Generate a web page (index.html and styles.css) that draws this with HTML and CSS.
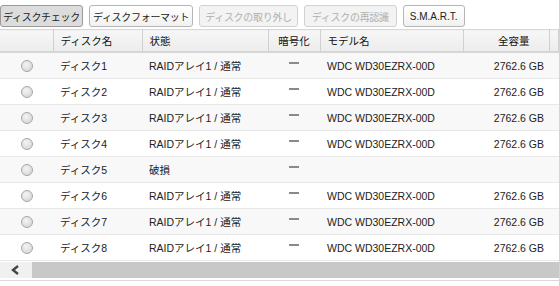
FILE: index.html
```html
<!DOCTYPE html>
<html lang="ja">
<head>
  <meta charset="UTF-8">
  <title>ディスク</title>
  <link rel="stylesheet" href="styles.css">
</head>
<body>
  <div class="toolbar">
    <button class="btn pressed">ディスクチェック</button>
    <button class="btn fmt">ディスクフォーマット</button>
    <button class="btn" disabled>ディスクの取り外し</button>
    <button class="btn rescan" disabled>ディスクの再認識</button>
    <button class="btn smart">S.M.A.R.T.</button>
  </div>
  <table class="grid">
    <colgroup>
      <col style="width:53px"><col style="width:89px"><col style="width:126px"><col style="width:52px"><col style="width:143px"><col style="width:86px"><col>
    </colgroup>
    <thead>
      <tr><th></th><th>ディスク名</th><th>状態</th><th class="c">暗号化</th><th>モデル名</th><th class="r">全容量</th><th></th></tr>
    </thead>
    <tbody id="rows"></tbody>
  </table>
  <div class="hscroll">
    <div class="arrow"><svg width="12" height="12" viewBox="0 0 12 12"><path d="M8 2 L3 6 L8 10" fill="none" stroke="#444" stroke-width="2.4"/></svg></div>
    <div class="track"></div>
  </div>
  <div class="bottom"></div>

<script>
const disks = [
  ['ディスク1', 'RAIDアレイ1 / 通常', 'WDC WD30EZRX-00D', '2762.6 GB'],
  ['ディスク2', 'RAIDアレイ1 / 通常', 'WDC WD30EZRX-00D', '2762.6 GB'],
  ['ディスク3', 'RAIDアレイ1 / 通常', 'WDC WD30EZRX-00D', '2762.6 GB'],
  ['ディスク4', 'RAIDアレイ1 / 通常', 'WDC WD30EZRX-00D', '2762.6 GB'],
  ['ディスク5', '破損', '', ''],
  ['ディスク6', 'RAIDアレイ1 / 通常', 'WDC WD30EZRX-00D', '2762.6 GB'],
  ['ディスク7', 'RAIDアレイ1 / 通常', 'WDC WD30EZRX-00D', '2762.6 GB'],
  ['ディスク8', 'RAIDアレイ1 / 通常', 'WDC WD30EZRX-00D', '2762.6 GB']
];
let html = '';
for (const d of disks) {
  html += `<tr><td class="c"><span class="radio"></span></td><td>${d[0]}</td><td>${d[1]}</td>` +
          `<td class="c"><span class="dash"></span></td><td>${d[2]}</td><td class="r">${d[3]}</td><td></td></tr>`;
}
document.getElementById('rows').innerHTML = html;
</script>
</body>
</html>
```

FILE: styles.css
```css
body { margin: 0; font-family: "Liberation Sans", "Noto Sans CJK JP", sans-serif; font-size: 10.5px; color: #222; background: #fff; }
.toolbar { display: flex; gap: 6px; padding: 5px 0 2px 0; height: 22px; }
.btn { font-family: inherit; font-size: 10px; letter-spacing: -0.3px; height: 22px; padding: 0 5px; border: 1px solid #b5b5b5; border-radius: 3px; background: linear-gradient(#ffffff, #f1f1f1); color: #222; }
.btn.pressed { background: #dcdcdc; border-color: #9a9a9a; padding: 0 2px; }
.btn.fmt { padding: 0 3px; }
.btn:disabled { color: #b0b0b0; border-color: #d2d2d2; background: #f3f3f3; }
.btn.rescan { padding: 0 7px; }
.btn.smart { letter-spacing: 0; padding: 0 6px; }
.grid { border-collapse: collapse; table-layout: fixed; width: 559px; }
.grid th { height: 21px; font-weight: normal; text-align: left; padding: 0 7px; background: linear-gradient(#f7f7f7, #ececec); border-top: 1px solid #d8d8d8; border-bottom: 2px solid #d6d6d6; border-right: 1px solid #d0d0d0; color: #111; }
.grid td { height: 25px; padding: 0 7px; border-bottom: 1px solid #e8e8e8; white-space: nowrap; }
.grid tbody tr:nth-child(odd) td { background: #f8f8f8; }
.grid .c { text-align: center; }
.grid .r { text-align: right; padding-right: 5px; }
.grid th.r { padding-right: 19px; }
.radio { display: inline-block; width: 10px; height: 10px; border-radius: 50%; border: 1px solid #a8a8a8; background: radial-gradient(circle at 40% 35%, #f4f4f4, #d0d0d0); vertical-align: middle; }
.dash { display: inline-block; width: 10px; height: 2px; background: #8a8a8a; vertical-align: 6px; }
.hscroll { display: flex; height: 16px; margin-top: 1px; }
.arrow { width: 32px; background: #f0f0f0; display: flex; align-items: center; justify-content: center; }
.track { flex: 1; background: #c8c8c8; }
.bottom { margin-top: 2px; border-top: 1px solid #dadada; }
```
